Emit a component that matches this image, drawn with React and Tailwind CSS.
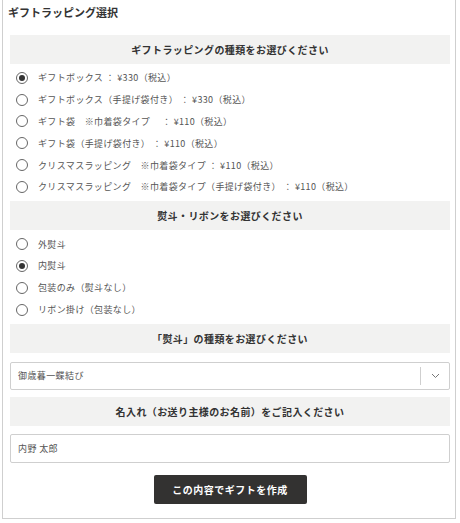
import React from "react";

const font = { fontFamily: '"Noto Sans CJK JP", "Noto Sans", sans-serif' };

function Radio({ checked, label }) {
  return (
    <div className="flex h-[21.8px] items-center pl-[6px]">
      <span className="flex h-[12px] w-[12px] shrink-0 items-center justify-center rounded-full border border-[#666] bg-white">
        {checked && <span className="h-[6px] w-[6px] rounded-full bg-[#333]" />}
      </span>
      <span className="ml-[10px] whitespace-pre text-[9px] leading-none tracking-[0.35px] text-[#555]">{label}</span>
    </div>
  );
}

function Header({ children }) {
  return (
    <div className="flex h-[29px] items-center justify-center bg-[#f2f2f1] text-[10px] font-bold tracking-[0.4px] text-[#333]">
      {children}
    </div>
  );
}

export default function App() {
  const opts1 = [
    [true, "ギフトボックス ： ¥330（税込）"],
    [false, "ギフトボックス（手提げ袋付き） ： ¥330（税込）"],
    [false, "ギフト袋　※巾着袋タイプ　 ： ¥110（税込）"],
    [false, "ギフト袋（手提げ袋付き） ： ¥110（税込）"],
    [false, "クリスマスラッピング　※巾着袋タイプ ： ¥110（税込）"],
    [false, "クリスマスラッピング　※巾着袋タイプ（手提げ袋付き） ： ¥110（税込）"],
  ];
  const opts2 = [
    [false, "外熨斗"],
    [true, "内熨斗"],
    [false, "包装のみ（熨斗なし）"],
    [false, "リボン掛け（包装なし）"],
  ];
  return (
    <div className="h-[523px] w-[460px] bg-white" style={font}>
      <div className="ml-[2px] w-[454px] border-x border-b border-[#cfcfcf] pl-[7px] pr-[5px] pb-[14px]">
        <div className="h-[35px] pt-[4px]">
          <div className="-ml-[2px] text-[11px] font-bold leading-[16px] tracking-[0px] text-[#333]">ギフトラッピング選択</div>
        </div>
        <Header>ギフトラッピングの種類をお選びください</Header>
        <div className="py-[3px]">
          {opts1.map(([c, l], i) => (
            <Radio key={i} checked={c} label={l} />
          ))}
        </div>
        <Header>熨斗・リボンをお選びください</Header>
        <div className="py-[3.5px]">
          {opts2.map(([c, l], i) => (
            <Radio key={i} checked={c} label={l} />
          ))}
        </div>
        <Header>「熨斗」の種類をお選びください</Header>
        <div className="mt-[9px] flex h-[28px] items-center rounded-[2px] border border-[#cfcfcf] bg-white">
          <span className="flex-1 pl-[7px] text-[9px] tracking-[0.4px] text-[#555]">御歳暮一蝶結び</span>
          <span className="h-[18px] w-px bg-[#cfcfcf]" />
          <span className="flex w-[28px] items-center justify-center">
            <svg width="9" height="6" viewBox="0 0 9 6" fill="none">
              <path d="M1 1 L4.5 4.5 L8 1" stroke="#777" strokeWidth="1" />
            </svg>
          </span>
        </div>
        <div className="mt-[7px]">
          <Header>名入れ（お送り主様のお名前）をご記入ください</Header>
        </div>
        <div className="mt-[8px] flex h-[29px] items-center rounded-[2px] border border-[#cfcfcf] bg-white pl-[7px] text-[9px] tracking-[0.4px] text-[#555]">
          内野 太郎
        </div>
        <div className="mt-[12px] flex justify-center">
          <div className="flex h-[29px] w-[153px] items-center justify-center rounded-[2px] bg-[#333231] text-[10px] font-bold tracking-[0.5px] text-white">
            この内容でギフトを作成
          </div>
        </div>
      </div>
    </div>
  );
}
